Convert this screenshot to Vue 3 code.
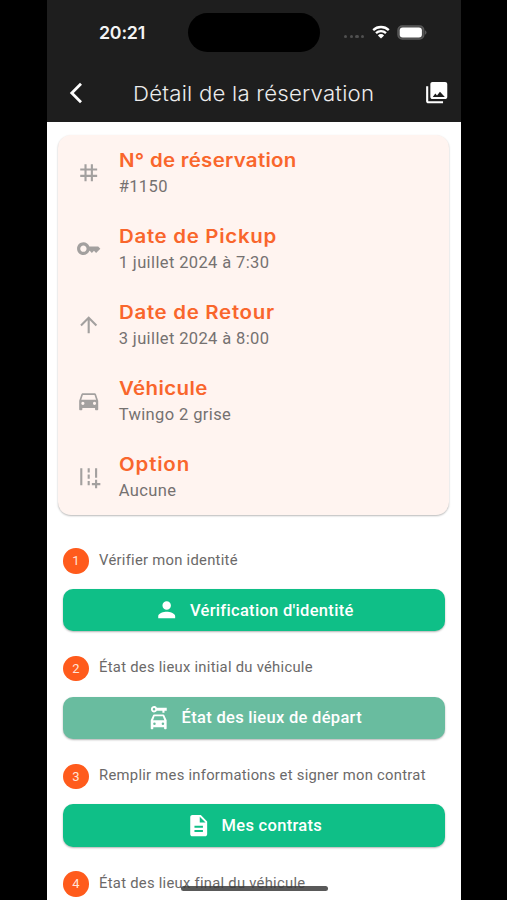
<script setup>
const details = [
  { icon: 'tag', title: 'N° de réservation', value: '#1150', k: 'a' },
  { icon: 'key', title: 'Date de Pickup', value: '1 juillet 2024 à 7:30', k: 'b' },
  { icon: 'up', title: 'Date de Retour', value: '3 juillet 2024 à 8:00', k: 'c' },
  { icon: 'car', title: 'Véhicule', value: 'Twingo 2 grise', k: 'd' },
  { icon: 'road', title: 'Option', value: 'Aucune', k: 'e' },
]
const steps = [
  { label: 'Vérifier mon identité', action: "Vérification d'identité", icon: 'person' },
  { label: 'État des lieux initial du véhicule', action: 'État des lieux de départ', icon: 'rental', muted: true },
  { label: 'Remplir mes informations et signer mon contrat', action: 'Mes contrats', icon: 'doc' },
  { label: 'État des lieux final du véhicule' },
]
const paths = {
  tag: 'M20 10V8h-4V4h-2v4h-4V4H8v4H4v2h4v4H4v2h4v4h2v-4h4v4h2v-4h4v-2h-4v-4h4zm-6 4h-4v-4h4v4z',
  key: 'M21 10h-8.35C11.83 7.67 9.61 6 7 6c-3.31 0-6 2.69-6 6s2.69 6 6 6c2.61 0 4.83-1.67 5.65-4H13l2 2 2-2 2 2 4-4.04L21 10zM7 15c-1.65 0-3-1.35-3-3s1.35-3 3-3 3 1.35 3 3-1.35 3-3 3z',
  up: 'M4 12l1.41 1.41L11 7.83V20h2V7.83l5.58 5.59L20 12l-8-8-8 8z',
  car: 'M18.92 6.01C18.72 5.42 18.16 5 17.5 5h-11c-.66 0-1.21.42-1.42 1.01L3 12v8c0 .55.45 1 1 1h1c.55 0 1-.45 1-1v-1h12v1c0 .55.45 1 1 1h1c.55 0 1-.45 1-1v-8l-2.08-5.99zM6.5 16a1.5 1.5 0 1 1 0-3 1.5 1.5 0 0 1 0 3zm11 0a1.5 1.5 0 1 1 0-3 1.5 1.5 0 0 1 0 3zM5 11l1.5-4.5h11L19 11H5z',
  road: 'M20 18v-3h-2v3h-3v2h3v3h2v-3h3v-2zM18 4h2v9h-2zM4 4h2v16H4zM11 4h2v4h-2zM11 10h2v4h-2zM11 16h2v4h-2z',
  person: 'M12 12c2.21 0 4-1.79 4-4s-1.79-4-4-4-4 1.79-4 4 1.79 4 4 4zm0 2c-2.67 0-8 1.34-8 4v2h16v-2c0-2.66-5.33-4-8-4z',
  rental: 'M10.3 2.6A3 3 0 1 0 10.3 5.4H15.5v2h2v-2H19.6V2.6zM7.6 5.2a1.2 1.2 0 1 1 0-2.4 1.2 1.2 0 0 1 0 2.4zM16.39 9H7.61c-.43 0-.81.28-.95.68L4.5 14.5v7.75c0 .41.34.75.75.75h.9c.41 0 .75-.34.75-.75V21h10.2v1.25c0 .41.34.75.75.75h.9c.41 0 .75-.34.75-.75V14.5l-2.16-4.82c-.14-.4-.52-.68-.95-.68zM8 19a1.2 1.2 0 1 1 0-2.4 1.2 1.2 0 0 1 0 2.4zm8 0a1.2 1.2 0 1 1 0-2.4 1.2 1.2 0 0 1 0 2.4zM6.7 14.4l1.4-3.8h7.8l1.4 3.8z',
  doc: 'M14 2H6c-1.1 0-1.99.9-1.99 2L4 20c0 1.1.89 2 1.99 2H18c1.1 0 2-.9 2-2V8l-6-6zm2 16H8v-2h8v2zm0-4H8v-2h8v2zm-3-5V3.5L18.5 9H13z',
}
</script>

<template>
  <main class="stage">
    <div class="phone">
      <header class="top">
        <div class="status">
          <span class="clock">20:21</span>
          <span class="island"></span>
          <span class="signals">
            <span class="dots"><i></i><i></i><i></i><i></i></span>
            <svg class="wifi" viewBox="0 0 18 14">
              <path d="M1.2 5.1a11.3 11.3 0 0 1 15.6 0M4 8.1a7.2 7.2 0 0 1 10 0" fill="none" stroke="#fff" stroke-width="2.3" />
              <path d="M9 13.6 5.9 10.4a4.4 4.4 0 0 1 6.2 0z" fill="#fff" />
            </svg>
            <svg class="battery" viewBox="0 0 30 15">
              <rect x=".9" y=".9" width="26" height="13.2" rx="4.4" fill="#4a4a4a" stroke="#5c5c5c" stroke-width="1.2" />
              <rect x="2.7" y="2.6" width="22.2" height="9.8" rx="3" fill="#fff" />
              <path d="M28.2 5.3c1.7.7 1.7 3.7 0 4.4z" fill="#666" />
            </svg>
          </span>
        </div>
        <div class="bar">
          <svg class="back" viewBox="0 0 14 22"><path d="M12 1.8 2.8 11l9.2 9.2" fill="none" stroke="#fff" stroke-width="2.8" /></svg>
          <h1>Détail de la réservation</h1>
          <svg class="gallery" viewBox="0 0 24 24" fill="#fff">
            <path fill-rule="evenodd" d="M22 16V4c0-1.1-.9-2-2-2H8c-1.1 0-2 .9-2 2v12c0 1.1.9 2 2 2h12c1.1 0 2-.9 2-2zM8.3 16l2.4-3.2 1.6 1.9 2.8-3.5 4.6 4.8zM2 6v14c0 1.1.9 2 2 2h14v-2H4V6z" />
          </svg>
        </div>
      </header>

      <section class="card">
        <div v-for="d in details" :key="d.k" class="row">
          <svg class="icon" viewBox="0 0 24 24"><path :d="paths[d.icon]" /></svg>
          <div class="info">
            <h2 :class="'t-' + d.k">{{ d.title }}</h2>
            <p>{{ d.value }}</p>
          </div>
        </div>
      </section>

      <section class="steps">
        <div v-for="(s, i) in steps" :key="i" class="step">
          <div class="label"><span class="badge">{{ i + 1 }}</span><span class="words">{{ s.label }}</span></div>
          <button v-if="s.action" :class="{ muted: s.muted }">
            <svg class="icon" viewBox="0 0 24 24"><path :d="paths[s.icon]" /></svg>
            <span>{{ s.action }}</span>
          </button>
        </div>
      </section>
      <div class="home"></div>
    </div>
  </main>
</template>

<style>
body { background: #000; overflow: hidden; }
</style>
<style scoped>
* { box-sizing: border-box; }
.stage { width: 507px; height: 900px; overflow: hidden; background: #000; padding-left: 46.6px; font-family: Roboto, sans-serif; }
.phone { position: relative; width: 414.8px; height: 900px; background: #fff; overflow: hidden; }
.top { height: 122px; background: #1e1e1e; color: #fff; }
.status { height: 64px; display: grid; grid-template-columns: 141.4px 132px 1fr; align-items: center; }
.clock { font: 600 17.8px Inter, sans-serif; padding-left: 52.4px; letter-spacing: -.2px; color: #f4f4f4; }
.island { height: 39px; border-radius: 20px; background: #000; }
.signals { display: flex; align-items: center; padding-left: 24px; }
.dots { display: flex; gap: 2.2px; padding-top: 9px; }
.dots i { width: 3.4px; height: 3.4px; border-radius: 50%; background: #505050; }
.wifi { width: 18px; height: 14px; margin-left: 7.5px; }
.battery { width: 30px; height: 15px; margin-left: 7.5px; }
.bar { height: 58px; display: flex; align-items: center; }
.back { width: 14px; height: 22px; margin-left: 22.4px; }
h1 { margin: 2px 0 0 50px; width: 242px; font: 300 20.5px/28px Inter, sans-serif; letter-spacing: .2px; white-space: nowrap; color: #ececec; transform: scaleX(1.083); transform-origin: left; }
.gallery { width: 25.4px; height: 25.4px; margin-left: 48.6px; }
.card { margin: 13px 12.5px 0 11.6px; height: 380px; padding-left: 17.8px; border-radius: 13px; background: #fff4f0; box-shadow: 0 1px 2px rgba(0,0,0,.28); }
.row { height: 76px; display: flex; align-items: center; gap: 17.3px; }
.info { padding-top: 2px; }
.icon { width: 25.4px; height: 25.4px; flex: none; fill: currentColor; fill-rule: evenodd; }
.row .icon { color: #a3a09f; }
h2 { margin: -1px 0 1px; font: 600 18.6px/26px Inter, sans-serif; letter-spacing: .35px; color: #f9662c; white-space: nowrap; transform: scaleX(1.1); transform-origin: left; }
h2.t-a { letter-spacing: .26px; }
h2.t-b, h2.t-c { letter-spacing: .63px; }
h2.t-e { letter-spacing: .75px; }
p { margin: 0; font-size: 16.5px; line-height: 26px; letter-spacing: .38px; color: #757170; }
.steps { padding: 33px 16.5px 0; }
.step { height: 107.7px; }
.label { height: 26px; display: flex; align-items: center; gap: 10.5px; }
.badge { width: 25.5px; height: 25.5px; flex: none; border-radius: 50%; background: #ff5b1c; color: #ffe4d8; font: 400 13px/25.5px Roboto, sans-serif; text-align: center; }
.words { font-size: 14.8px; line-height: 20px; letter-spacing: .26px; color: #6b6969; white-space: nowrap; margin-top: -3px; }
button { margin: 15px 0 0; width: 381.5px; height: 42.3px; border: 0; border-radius: 10px; background: #0fbf87; color: #fff; box-shadow: 0 1px 2px rgba(0,0,0,.3); display: flex; align-items: center; justify-content: center; gap: 10.5px; font: 500 16.5px Roboto, sans-serif; letter-spacing: .3px; padding: 0; }
button.muted { background: #69bc9f; }
.home { position: absolute; left: 134px; top: 886px; width: 147.5px; height: 5px; border-radius: 3px; background: rgba(60,60,60,.85); }
</style>
